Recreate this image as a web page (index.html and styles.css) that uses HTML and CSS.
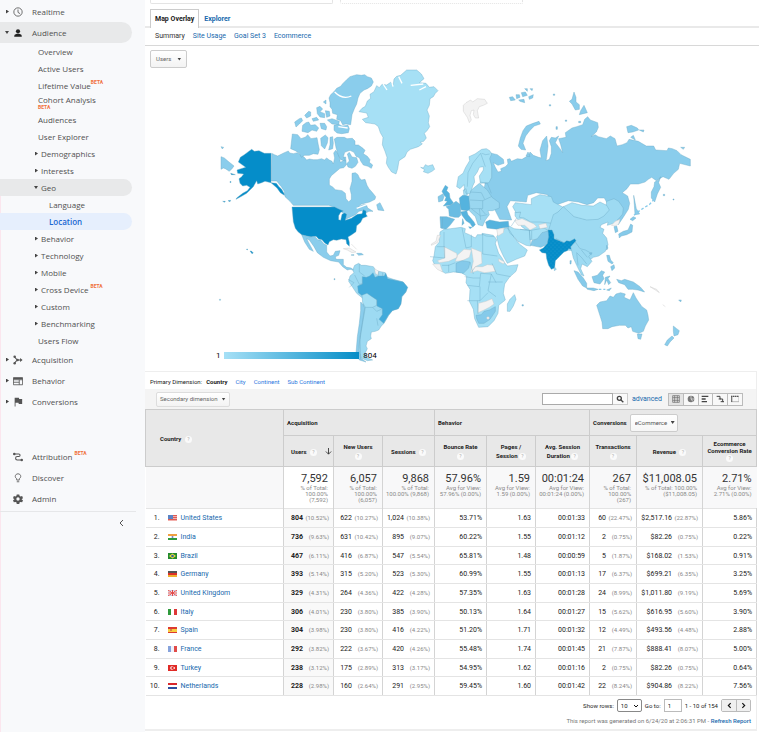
FILE: index.html
```html
<!DOCTYPE html>
<html lang="en">
<head>
<meta charset="utf-8">
<title>Location - Audience</title>
<link rel="stylesheet" href="styles.css">
</head>
<body>
<nav class="side" aria-label="Reports">
  <a class="item" href="#"><i class="caret"></i><svg class="ico" viewBox="0 0 24 24"><circle cx="12" cy="12" r="10" fill="none" stroke="currentColor" stroke-width="2"/><path d="M12 6v7l5 3" fill="none" stroke="currentColor" stroke-width="2"/></svg>Realtime</a>
  <a class="item open" href="#"><i class="caret down"></i><svg class="ico dark" viewBox="0 0 24 24"><circle cx="12" cy="8" r="5"/><path d="M3 21v-2c0-4 6-5 9-5s9 1 9 5v2z"/></svg>Audience</a>
  <a class="sub" href="#">Overview</a>
  <a class="sub" href="#">Active Users</a>
  <a class="sub" href="#">Lifetime Value<b class="beta">BETA</b></a>
  <a class="sub two" href="#"><span>Cohort Analysis</span><b class="beta">BETA</b></a>
  <a class="sub" href="#">Audiences</a>
  <a class="sub" href="#">User Explorer</a>
  <a class="sub tree" href="#"><i class="caret"></i>Demographics</a>
  <a class="sub tree" href="#"><i class="caret"></i>Interests</a>
  <a class="sub tree open" href="#"><i class="caret down"></i>Geo</a>
  <a class="sub leaf" href="#">Language</a>
  <a class="sub leaf current" href="#">Location</a>
  <a class="sub tree" href="#"><i class="caret"></i>Behavior</a>
  <a class="sub tree" href="#"><i class="caret"></i>Technology</a>
  <a class="sub tree" href="#"><i class="caret"></i>Mobile</a>
  <a class="sub tree" href="#"><i class="caret"></i>Cross Device<b class="beta gap">BETA</b></a>
  <a class="sub tree" href="#"><i class="caret"></i>Custom</a>
  <a class="sub tree" href="#"><i class="caret"></i>Benchmarking</a>
  <a class="sub" href="#">Users Flow</a>
  <a class="item" href="#"><i class="caret"></i><svg class="ico" viewBox="0 0 24 24"><path d="M4 5l6 7-6 7M10 12h10" fill="none" stroke="currentColor" stroke-width="2.5"/><circle cx="4" cy="4" r="3"/><circle cx="4" cy="20" r="3"/><circle cx="11" cy="12" r="3"/><path d="M17 7l6 5-6 5z"/></svg>Acquisition</a>
  <a class="item" href="#"><i class="caret"></i><svg class="ico" viewBox="0 0 24 24"><path d="M1 4h22v17H1zM1 9h22M15 9v12M1 15h14" fill="none" stroke="currentColor" stroke-width="2"/><path d="M1 4h22v4H1z"/></svg>Behavior</a>
  <a class="item" href="#"><i class="caret"></i><svg class="ico" viewBox="0 0 24 24"><path d="M4 2h10l1 3h7v12h-8l-1-3H6v9H4z"/></svg>Conversions</a>
  <div class="split"></div>
  <a class="item" href="#"><i class="caret none"></i><svg class="ico" viewBox="0 0 24 24"><path d="M4 5h10c4 0 4 6 0 6h-4c-5 0-5 8 0 8h10" fill="none" stroke="currentColor" stroke-width="2.5"/><circle cx="3" cy="5" r="3"/><circle cx="21" cy="19" r="3"/></svg>Attribution<b class="beta gap">BETA</b></a>
  <a class="item" href="#"><i class="caret none"></i><svg class="ico" viewBox="0 0 24 24"><path d="M9 17v-3c-6-4-4-12 3-12s9 8 3 12v3zM9 21h6" fill="none" stroke="currentColor" stroke-width="2"/></svg>Discover</a>
  <a class="item" href="#"><i class="caret none"></i><svg class="ico" viewBox="0 0 24 24"><path fill-rule="evenodd" d="M9 1h6l1 4 2 1 4-1 2 5-3 2v1l3 2-2 5-4-1-2 1-1 4H9l-1-4-2-1-4 1-2-5 3-2v-1l-3-2 2-5 4 1 2-1zM12 8a4 4 0 100 8 4 4 0 000-8z"/></svg>Admin</a>
  <button class="collapse" aria-label="Collapse menu"><svg viewBox="0 0 8 8"><path d="M5 1L2 4l3 3" fill="none" stroke="currentColor"/></svg></button>
</nav>

<main class="main">
  <div class="cards"><div class="card"></div><div class="card dotted"></div></div>
  <div class="tabs"><a class="tab active" href="#">Map Overlay</a><a class="tab" href="#">Explorer</a></div>
  <div class="subtabs"><a class="here" href="#">Summary</a><a href="#">Site Usage</a><a href="#">Goal Set 3</a><a href="#">Ecommerce</a></div>
  <div class="metric"><button class="btn">Users<i class="drop"></i></button></div>

  <svg class="map" viewBox="0 24 1470 900" role="img" aria-label="Users by country">
    <defs>
      <linearGradient id="scale"><stop offset="0" stop-color="#a6e0f6"/><stop offset="1" stop-color="#058dc7"/></linearGradient>
      <pattern id="dots" width="12" height="12" patternUnits="userSpaceOnUse"><rect width="12" height="12" fill="#058dc9"/><circle cx="3" cy="3" r="1" fill="#6cc0e4"/><circle cx="9" cy="9" r="1" fill="#6cc0e4"/></pattern>
    </defs>
    <!-- North America, Arctic, Greenland -->
    <g class="land">
      <path class="c2" d="M185 280l8 4 10 4 12-6 8-4 12-5 4 6 11 2 12-3 13 9 8 5 7 8 8-3 12 2 12 0 13-3 8 4 7-6 8 6 8 4 4 8 4-18-3-15 6-8 10 14 4 22 8-4 2-12 6 0 2 24-8 8-11 2-12 10-14 12-6 10 0 18 10 6 8 8 20 3 10 8 2 16 8 10 8-8 0-14-4-18 6-22 0-24 10-2 8 6 4 10 7 6 10-2 6 18 6 10 12 14 8 10-2 8-16 8-24 6-12 10 16-8 10 0 4 10 16 10-12 0-12 6-10-8-8 2-12 11-20 9-8 4-3-12-8-10-12-6-16-10-12-4H250l-10-12-15-14-2-16-9-14-14-17h-16z"/>
      <path class="c2" d="M372 95l8-10 12-6 6-8 12-12 10-9 20-6 14 2 10-2 8 6 12 4 6 12-6 12-12 8-10 4-12 10-6 14-4 18-6 12-8 20-4 30-14-2-10 2-6-12-12-4 2-14-14-4-2-12-6-8 0-12-3-14 5-10zM372 196l14-3 10 5 18-2 4 10-3 12-20 3-14-2-9-8zM373 237l8-5 22 0 8 4 16-1 8 8 0 12 10 0 14 10 6 6-5 10 12 8 8 10-2 8 10 8-4 10-10-6-14-4-8-12-4-10-10-4-6-12-12-6-16 6-4 14 6 12-14-4-8-16-6-20z"/>
      <path class="c2" d="M247 222l16 2 10 12 14-5 6-7 10 12 18-3 4 22 3 14-4 14-14-2-12 5-14 0-10 6-6-12-12-8-14-6zM332 235l14-10 8 8-2 16-8 18-10-10zM360 232l8-2 2 20-2 16-12 4 4-16zM254 186l14-10 6-2 4 8-10 10-10 9zM284 166l12-12 6 2 0 12-12 6zM278 196l10-8 8-2 6 10 14-2 10 10-6 10-14-4-12 8-18-4zM306 176l14-4 6 8-16 4zM320 143l10-4 8 8-8 8 14 6 0 12-14-2-8-10zM346 152l12 2 2 14-10 4zM340 126l8-6 0 12zM330 190l14 0 6 10-2 10-14-4zM352 180l14-4 22 8-2 10-20-2zM412 282l6-5 8 14 14 2 4 14-8 12-10 6-12-4-4-10 8-8zM500 434l10-6 6 12 6 12-18-2z"/>
      <path class="bay" d="M374 96q24 24 50 12M462 345q-14-16-24-12M385 200l28 4M440 445l32-12"/>
      <path class="c1" d="M447 155l9-10 10-6 6-16 10-8-2-12 12-8 8-18 8 6 8-10 14 2 12-8 8 6 2-16 8-8 12-3 18-16 30 0 14 12 8 14-14 12 20 2 10 12 14-2 12 12-8 8-6 10-10 6-2 20-7 14 7 18-3 20 4 12-8 12-8 8 6 14-8 10-10 2 6 6-12 8-24 8-10 8-6 14-18 12-4 24-5 16-13-6-10-14-6-12 2-18-6-18-8-20 2-22-8-14-6-18-10-8-14-2-14-2-10-10 18-6-5-13z"/>
      <path class="bay" d="M519 72l12 18M566 50l10 20M545 64l4 16M602 76l38-4M628 90l20-10"/>
      <path class="c1" d="M632 322l8 2 6-10 8 4 14-4 6 14-8 6-12 6-14-5 4-6z"/>
      <path class="us" d="M183 280v88l-18-4-10 4-12 4-3-10-10 18-10 10-10 10-14 8-18 10 2-4 18-14 14-8 8-10-10-6-12 2-8-8-3-14 8-6 6-8-18-2-2-10 12-4 14-4-22-16 6-14 12-8 8-6 14-10 8 6 14-2 16 8zM183 368l16 2 8 10 8 8 8 14 0 4-12-8-10-14zM38 424l8 0-2 3zM54 422l8-1-2 4zM62 340l14 4-12 0zM60 364l4 2-4 2z"/>
      <path class="c2" d="M33 290l10 4 14 12 15 12-6 8-8 8-12-8-6-2-7 4zM33 260l8 2-4 5z"/>
    </g>
    <!-- Russia and northern Europe -->
    <g class="land" transform="translate(660)">
      <path class="c2" d="M178 278l24 6 18 14 2 12-18 6-14-8 6 14 8 14 10-2-2-8 14-6 8-8-2-14 8-2 4 8 18-8 14 2 20-12 4-10 10 10 16 6 8 2-4-24 8-28 12-14 4 30-4 34-2 10 10-4 6-18 0-20-6-18 6-10 12 2 10-6-10 20 14 18 8 12-6-24-6-18 22-4-2-14 20-14 14-4 18-6 6-16 9-8 8 10 22 8 2 14-6 14-16 14 12-6 10 6 24 6 12-8 14 8 6 22 16-4 14-6 6-10 28 6 10 6 14 8 22 0 6 12 34 2 4-8 12 2 14 6 12 12 28 14v20l-32-8-4 18-14 12-14 18-18-8-20 12-14-10-10 6-10 8-20 6-24 0-10 14-14 12 16 10 6 22-4 18-14 22-16 24-6-24-8-6-4-22-14-10-10-18-20 0-12 14-20 6-26-8-30-4-34 12-24-12-4-18-34-6-26 8-4 20-24-2-24-2-10 18 14 40-36-2-16-32-16-18-6-22-10-12 4-22-2-30z"/>
      <path class="c2" d="M692 350l-6 18 6 14-10 20-8 24-10-12 0-18 8-16 2-14 12-6zM611 406l8 40 10 16-14 2zM265 258l6-24 8-22 10-14 20-8 18-6 4 8-18 6-14 14-12 16-8 22 8 20-14-2zM418 124l8-6 6-22 6 16 0 14 10 8 0 14-12 2-10-18zM462 136l10 22-24 6 4-12zM590 200l14-4 18 8 4 6-18 6-14 2zM628 210l14 0-2 6zM602 232l8-6 6 14zM752 262l12 0-4 6zM288 288l12 2-6-14z"/>
      <path class="c3" d="M238 112l10-2 8 10-14 2zM258 104l10 0 2 8-10 4zM274 98l12-2 6 10-14 4zM284 86l8 0 0 8zM296 110l14-6-2 10-10 4zM266 120l16-2 2 10-14-4zM300 86l8 0-2 6zM370 102h4v4h-4zM358 134h4v4h-4zM378 200h4v8h-4zM406 180h4v4h-4zM446 184h6v4h-6zM700 403h4v4h-4zM729 417h3v3h-3z"/>
      <path class="no" d="M108 128l14-8 6 6 14-10 22 2 8 12-12 6-12 4-6 12 4 22-10 0-6-10 2-14-8 2-4 14 4 14-6 8-6-16-12-18 0-18z"/>
      <path class="c1" d="M85 350l14-10 8-18 12-20-2-12 18-8 20-14 14-2 10 6 6 10-6 14 6 22 0 34-8 16-26 2-3-22 12-18 0-10-12 2-6 14-10 14 2 16-6 12-6 22-12 2-6-10-2-18-12 12-10-6zM100 390l8-4 4 18-10 6z"/>
      <path class="edge" d="M112 380l2-42 14-28 24-30 14 40M155 280l12 4 12-2M150 366l22 4 12 30M152 372l-2 16 16 4"/>
      <path class="c4" d="M46 376l8 6-4 10 8 8 2 14 10 14-6 6-24 4 12-14-8-2 4-10-6-6-6-12z"/><path class="c3" d="M24 410l14-8 4 8-4 12-12 4z"/>
    </g>
    <!-- Europe, Africa, Asia, Oceania -->
    <g class="land" transform="translate(630 420)">
      <path class="c1" d="M285 36l60 4 60 4 4 50-76 6-28-20-10-20-10-12z"/>
      <path class="c3b" d="M146-10l8-20 24-20 24 20 14 22 22 16 0 16-20 8-14 0 4 12-12 16-8 18-14-4-8-24-18-18-6-12z"/>
      <path class="edge" d="M150 0l38 2 0 24-36 0M188 2l26-12M182 26l14 16M150-24l34 2 10 20M154 26l28 22 20-4M178 26l4 34"/>
      <path class="c5" d="M78 20l16-6 14-10 14 10 0 32-6 6-12 0-16-4-2-20zM60 50l20 0 24 8-14 18-12 12-16-4z"/>
      <path class="c4" d="M118-6l10-8 18 2 4 38-6 6-20-2-4-18zM122 36l18-4 4 12 18 22 4 8-8 8-8-12-12-8-12-16zM128 56l4 14-6 6zM146 80l10 2-6 4z"/>
      <path class="edge" d="M68 52l-2 34"/>
      <path class="c4" d="M197 66l12-6 30 6 26-2 2 18-22 2-12 4-16-2-16-2z"/>
      <path class="c1" d="M278 20l8-12 48 6 0-18 26-12 34 6 6 16 30 16-16 16-8 18-10 14-36-4-28 0-20-12-14-2 4-16-14 2z"/>
      <path class="c1" d="M268 78l14 8 16 2 30 2 4 48-14-2-12-6-12-6-12-14-12-10-6-14zM328 92l44-8 14 8-16 10-12 16-28 2zM230 110l14-22 20-4 18 28 16 20 24 18-8 18-26 10-26 12-12-22-12-26zM186 100l34 6 6 34 6 32-40-2z"/>
      <path class="no" d="M284 62l22-6 36 16 8 8-20 10-16-14-20 0zM356 74l22-4 4 12-22 4zM230 88l22-4-2 14-16 10z"/>
      <path class="c1b" d="M400 44l14-8 16-16 20 8 10 20 36 10 40-8 20-20 4-26 22-8 14 8 14 20-2 18-10 12-16 16-20 6 2-10-20 8-4 8 12 6-4 12 12 14 4 20-8 20-20 14-16 4-8 6-14-8-16 2-16-20-32-2-28-14-6-16-18-14 4-16z"/>
      <path class="c1" d="M430 20l26-12 30 8 34 2 20-12 20 10 8 14-16 18-18 10-34 2-38-10z"/>
      <path class="c3" d="M332 136l4-14 16-6 14-18 20-6 12 8-10 20-12 16-14 6z"/>
      <path d="M384 90l12 0 6 14 0 12 30 12 8-6 10 2 14-8 4 6-10 12-4 14-8-2-4 6-10 4-12 12-14 14-2 22-10 4-8-12-6-20-2-16-12-2-8-8 12-6 12-14 4-20z" fill="url(#dots)"/>
      <path class="c1b" d="M452 140l14-14 14 20 16 4 18 10-8 10 10 14-14 16-16-8-4 14 10 22-8-4-14-28-10-22zM403 200l6 8-6 4z"/>
      <path class="edge" d="M470 158l16 16 14 18M484 150l18 22M408 116l24 12M470 158l4 38M335 92l0 26M290 54l-16 24M300 88l32 4"/>
      <path class="no" d="M574 76l12-12 14-6-4 14-10 6z"/>
      <path class="c3" d="M582 80l8-2 4 16-8 4zM596 102l14-8 14-4 8-18 6 4-2 20-16 8-16 4-6 6zM630 58l10-8 8 4-10 8zM560 136l4 8-4 6zM508 160l8-2-2 6zM560 166l8 0 4 14 8 8-4 4-12-8zM572 200l10-6 2 10-8 8zM462 212l12 4 16 18 10 16 0 14-12-6-14-20zM500 264l20 0 14 4-12 4-20-4zM516 230l16-4 12-14 10 4-6 10 4 10-12 16-18-4zM556 232l14-4-6 8 8 12-6 6-6-14-6 14zM590 238l14 4 10-4 26 8 20 14 14 16-20-6-16-2-14 0-10-14-18-6zM560 270l14-6-6 8zM450 182l4 0-1 10-3 0z"/>
      <path class="chain" d="M642 46l14-12 18-12 14-8 14-16M536 268l20 0"/>
      <path class="c2" d="M530 316l10-10 20-4 10-14 10 4 8-10 14-4 14 4-4 10 18 8 10-22 8 16 8 12 10 14 14 10 4 16 2 14-10 18-6 16-14 6-18-6-4-14-10 4-8-8-18 0-22 4-12 6-16 0-2-20zM652 402l14 0-4 16-8-2zM760 378l10 8 8 6-4 12-12 4-2-14zM756 408l6 6-12 12-8 12-8-4 8-14z"/>
      <path class="c3" d="M776 300l8 0-2 6zM306 314h4v4h-4z"/>
      <path class="no" d="M690 260l20 8 8 10-12-8zM728 314l8 6"/>
      <path class="c1" d="M60 96l12-8 20-2 32-4 12 4-2 12 14 6 18 10 6-10 18 0 8 4 26 2 6 10-4 10 10 30 10 14 8 14 8 10 32-4-6 20-20 18-14 20-4 28 6 20-20 16-2 24-12 22-18 18-28 2-12-26-4-28-12-24 2-36-12-20 2-20-16-10-24-2-24 4-16-10-16-16-6-12 4-14 4-28 12-14z"/>
      <path class="no" d="M72 140l38 20 2 12-26 12-28 4-6-6 22-8zM112 166l20-18 22 2-6 22-22 10-20 2zM154 144l30 12 2 34-20 10-14 18 8-34zM166 200l22 0 14-6 18 2 6 18-32 4-22-6-18 6zM34 132l14-8 4-18 10 0-10 22-18 8zM38 192l22 0 8 24-16-8zM176 310l22-6 18-8 6 16-14 10-16 8-18 8zM236 176l18 10-4 6-14-8z"/>
      <path class="c3" d="M108 190l18-8 24 4-4 18-16 16-22-4zM168 346l16-2 8-10 16-4 18-10 0 14-16 24-18 12-16 0-6-14z"/>
      <path class="edge" d="M72 140V96M126 84l12 60 16-4V104M188 102l0 60M86 194v22M66 196l20 0 20-8M150 186l10 36M188 162l44 6M216 190l14 32 42 8M134 230l26 4 20 0M142 256l36 4 4-40 32 2-10 50 24 18M180 260l0 42-38 0M180 302l24-24M214 222l14 26M172 302l2 40M204 246l44 0M30 170l44 4V140H50"/>
      <path class="c1" d="M262 312l8-14 14-14 4 14-8 20-10 16-8 0z"/>
      <circle class="no" cx="204" cy="354" r="4"/>
    </g>
    <!-- United States, Mexico, South America -->
    <g class="land" transform="translate(0 420)">
      <path class="c1b" d="M428 210l6-14 12-6 8 6 12 0 24 4 8 12 28 6 6 14 18 6 30 8 12 16-4 14-12 14-4 22-8 14-16 4-12 16-14 24-8 8-8 12-10 4-12 2-2 12 2 8-12 8-4 14 4 8-6 12 2 14 20 8-16 2-18-8-8-20 4-44 4-42 6-38 0-34-20-16-12-18-12-18 4-16 12-10z"/>
      <path class="c1" d="M456 284l14-8 12 10 18 12 0 18-12 6-22 0-8-14z"/>
      <path class="c2" d="M452 306l6 6 6 12-8 50-6 36-4 40 6 24 16 12-20-6-10-20 4-50 6-40 4-38z"/>
      <path class="us" d="M246 21h128l12 6 14 6-8 4-6 10 0 12 6 2 4-18 8-4 6 4-4 18 18-6 18-12 14-2 4-12 8 4 0 10 4 6-14 6-6 12-12 10-2 18-14 10-10 6 4 16 0 12-8-8-2-12-14-2-14 4-10-2-12 6-4 10-10-6-8-10-10-2-8-8-14 2-28-6-12-10-8-10-6-20zM112 150l-3-2 4-1zM120 153l4 0 6 6-4 2z"/>
      <path class="c2" d="M275 104l24 7 14-2 10 10 10 2 8 10 9 5 0 20 10 12 10-2 6-12 14-2-4 14-10 4 2 8 22 0 0 16 10 8 14 2 6 6-10-2-8 2-14-10-12-14-24-4-22-10-18-14-10-18-14-20-8-4 6 12 14 26-12-6-14-22zM440 160l14 0 6 4-14 2zM424 164h8v2h-8zM372 236h3v3h-3zM28 298l4 0-2 4z"/>
      <path class="no" d="M400 146l18-2 20 12-12 2-14-8zM494 206l12 8-2 12-8-6zM424 132l16 16"/>
      <path class="br" d="M443 258l14-6 0-22 12 2 10-4 10-10 6 14 10-4 18 0 4-8 6 16 18 4 28 6 14 16-6 14-12 14-2 22-8 14-18 6-12 14-14 24-14-12 10-14 0-18-16-8 0-18-18-12-12-8-16 6-10-8z"/>
      <path class="edge" d="M448 192l0 24 16 12M414 238l18 10-14 14M434 225l14 28 10-2M466 322l-8 46-8 50 2 60M488 322l12 12 14-6M500 355l4 22M506 214l-2 14M518 218v10"/>
    </g>
    <rect x="42" y="876" width="405" height="21" fill="url(#scale)"/>
    <text x="18" y="894">1</text><text x="460" y="894">804</text>
  </svg>

  <section class="report">
    <div class="dims"><span>Primary Dimension:</span><b>Country</b><a href="#">City</a><a href="#">Continent</a><a href="#">Sub Continent</a></div>
    <div class="tools">
      <button class="btn dim">Secondary dimension<i class="drop"></i></button>
      <form class="search"><input type="search" aria-label="Search table"><button type="button" aria-label="Search"><svg viewBox="0 0 12 12"><circle cx="5" cy="5" r="3" fill="none" stroke="#444" stroke-width="2"/><path d="M7 7l4 4" stroke="#444" stroke-width="2"/></svg></button></form>
      <a class="adv" href="#">advanced</a>
      <div class="views">
        <button class="on" aria-label="Table"><svg viewBox="0 0 12 12"><path d="M1 1h10v10H1zM4 1v10M8 1v10M1 4h10M1 8h10" fill="none" stroke="#666"/></svg></button>
        <button aria-label="Percentage"><svg viewBox="0 0 12 12"><circle cx="6" cy="6" r="5" fill="#777"/><path d="M6 1v5h5M6 6l3 4" fill="none" stroke="#eee"/></svg></button>
        <button aria-label="Performance"><svg viewBox="0 0 12 12"><path d="M1 2h10M1 6h6M1 10h8" stroke="#444" stroke-width="2"/></svg></button>
        <button aria-label="Comparison"><svg viewBox="0 0 12 12"><path d="M1 2h5v4h4v4h2M4 6h3M7 10h4" fill="none" stroke="#444" stroke-width="1.5"/></svg></button>
        <button aria-label="Pivot"><svg viewBox="0 0 12 12"><path d="M0 2h12v8H0z" fill="none" stroke="#999"/><path d="M0 2h12M1 2v9" stroke="#555" stroke-width="2" stroke-dasharray="2 1"/></svg></button>
      </div>
    </div>

    <table>
      <colgroup><col class="w138"><col class="w50"><col class="w49"><col class="w52"><col class="w52"><col class="w49"><col class="w54"><col class="w47"><col class="w66"><col class="w54"></colgroup>
      <thead>
        <tr class="groups"><th class="dimh" rowspan="2">Country <i class="q">?</i></th><th colspan="3">Acquisition</th><th colspan="3">Behavior</th><th colspan="3"><div class="conv"><label for="goal">Conversions</label><div class="pick"><select id="goal"><option>eCommerce</option></select><i class="drop"></i></div></div></th></tr>
        <tr class="heads"><th><div class="sort"><span>Users <i class="q">?</i></span><svg viewBox="0 0 8 8"><path d="M4 0v7M1 4l3 3 3-3" fill="none" stroke="#333"/></svg></div></th><th>New Users<br><i class="q">?</i></th><th>Sessions <i class="q">?</i></th><th>Bounce Rate<br><i class="q">?</i></th><th>Pages /<br>Session <i class="q">?</i></th><th>Avg. Session<br>Duration <i class="q">?</i></th><th>Transactions<br><i class="q">?</i></th><th>Revenue <i class="q">?</i></th><th class="tight">Ecommerce<br>Conversion Rate<br><i class="q">?</i></th></tr>
      </thead>
      <tbody>
        <tr class="total"><td></td><td class="sorted"><strong>7,592</strong>% of Total:<br>100.00%<br>(7,592)</td><td><strong>6,057</strong>% of Total:<br>100.00%<br>(6,057)</td><td><strong>9,868</strong>% of Total:<br>100.00% (9,868)</td><td><strong>57.96%</strong>Avg for View:<br>57.96% (0.00%)</td><td><strong>1.59</strong>Avg for View:<br>1.59 (0.00%)</td><td><strong>00:01:24</strong>Avg for View:<br>00:01:24 (0.00%)</td><td><strong>267</strong>% of Total:<br>100.00%<br>(267)</td><td><strong>$11,008.05</strong>% of Total: 100.00%<br>($11,008.05)</td><td><strong>2.71%</strong>Avg for View:<br>2.71% (0.00%)</td></tr>
      </tbody>
      <tbody class="rows">
        <tr><td><div class="place"><span>1.</span><svg viewBox="0 0 9 6"><path fill="#f3b0ac" d="M0 0h9v6H0z"/><path stroke="#dd5a55" d="M0 .5h9M0 2.5h9M0 4.5h9"/><path fill="#5b83c4" d="M0 0h5v4H0z"/></svg><a href="#">United States</a></div></td><td><b>804</b><i>(10.52%)</i></td><td>622<i>(10.27%)</i></td><td>1,024<i>(10.38%)</i></td><td>53.71%</td><td>1.63</td><td>00:01:33</td><td>60<i>(22.47%)</i></td><td>$2,517.16<i>(22.87%)</i></td><td>5.86%</td></tr>
        <tr><td><div class="place"><span>2.</span><svg viewBox="0 0 9 6"><path fill="#fff" d="M0 0h9v6H0z"/><path fill="#f0a040" d="M0 0h9v2H0z"/><path fill="#2f9a3c" d="M0 4h9v2H0z"/><circle cx="4.500" cy="3" r="1" fill="#7080c0"/></svg><a href="#">India</a></div></td><td><b>736</b><i>(9.63%)</i></td><td>631<i>(10.42%)</i></td><td>895<i>(9.07%)</i></td><td>60.22%</td><td>1.55</td><td>00:01:12</td><td>2<i>(0.75%)</i></td><td>$82.26<i>(0.75%)</i></td><td>0.22%</td></tr>
        <tr><td><div class="place"><span>3.</span><svg viewBox="0 0 9 6"><path fill="#228b30" d="M0 0h9v6H0z"/><path fill="#f4dc3a" d="M1 3l3.500-2.500L8 3 4.500 5.500z"/><circle cx="4.500" cy="3" r="1.300" fill="#3566a8"/></svg><a href="#">Brazil</a></div></td><td><b>467</b><i>(6.11%)</i></td><td>416<i>(6.87%)</i></td><td>547<i>(5.54%)</i></td><td>65.81%</td><td>1.48</td><td>00:00:59</td><td>5<i>(1.87%)</i></td><td>$168.02<i>(1.53%)</i></td><td>0.91%</td></tr>
        <tr><td><div class="place"><span>4.</span><svg viewBox="0 0 9 6"><path fill="#555" d="M0 0h9v2H0z"/><path fill="#dd3028" d="M0 2h9v2H0z"/><path fill="#f0b030" d="M0 4h9v2H0z"/></svg><a href="#">Germany</a></div></td><td><b>393</b><i>(5.14%)</i></td><td>315<i>(5.20%)</i></td><td>523<i>(5.30%)</i></td><td>60.99%</td><td>1.55</td><td>00:01:13</td><td>17<i>(6.37%)</i></td><td>$699.21<i>(6.35%)</i></td><td>3.25%</td></tr>
        <tr><td><div class="place"><span>5.</span><svg viewBox="0 0 9 6"><path fill="#7d90c8" d="M0 0h9v6H0z"/><path stroke="#fff" stroke-width="2" d="M0 0l9 6M0 6l9-6M4.500 0v6M0 3h9"/><path stroke="#e04848" d="M0 0l9 6M0 6l9-6M4.500 0v6M0 3h9"/></svg><a href="#">United Kingdom</a></div></td><td><b>329</b><i>(4.31%)</i></td><td>264<i>(4.36%)</i></td><td>422<i>(4.28%)</i></td><td>57.35%</td><td>1.63</td><td>00:01:28</td><td>24<i>(8.99%)</i></td><td>$1,011.80<i>(9.19%)</i></td><td>5.69%</td></tr>
        <tr><td><div class="place"><span>6.</span><svg viewBox="0 0 9 6"><path fill="#fff" d="M0 0h9v6H0z"/><path fill="#2f9a3c" d="M0 0h3v6H0z"/><path fill="#dd3838" d="M6 0h3v6H6z"/></svg><a href="#">Italy</a></div></td><td><b>306</b><i>(4.01%)</i></td><td>230<i>(3.80%)</i></td><td>385<i>(3.90%)</i></td><td>50.13%</td><td>1.64</td><td>00:01:27</td><td>15<i>(5.62%)</i></td><td>$616.95<i>(5.60%)</i></td><td>3.90%</td></tr>
        <tr><td><div class="place"><span>7.</span><svg viewBox="0 0 9 6"><path fill="#dd3a30" d="M0 0h9v6H0z"/><path fill="#f8cf40" d="M0 2h9v3H0z"/><path fill="#d8804a" d="M2 2h2v2H2z"/></svg><a href="#">Spain</a></div></td><td><b>304</b><i>(3.98%)</i></td><td>230<i>(3.80%)</i></td><td>416<i>(4.22%)</i></td><td>51.20%</td><td>1.71</td><td>00:01:32</td><td>12<i>(4.49%)</i></td><td>$493.56<i>(4.48%)</i></td><td>2.88%</td></tr>
        <tr><td><div class="place"><span>8.</span><svg viewBox="0 0 9 6"><path fill="#eef1fa" d="M0 0h9v6H0z"/><path fill="#87a3dc" d="M0 0h3v6H0z"/><path fill="#e04a48" d="M6 0h3v6H6z"/></svg><a href="#">France</a></div></td><td><b>292</b><i>(3.82%)</i></td><td>222<i>(3.67%)</i></td><td>420<i>(4.26%)</i></td><td>55.48%</td><td>1.74</td><td>00:01:45</td><td>21<i>(7.87%)</i></td><td>$888.41<i>(8.07%)</i></td><td>5.00%</td></tr>
        <tr><td><div class="place"><span>9.</span><svg viewBox="0 0 9 6"><path fill="#e02a26" d="M0 0h9v6H0z"/><circle cx="4" cy="3" r="1.800" fill="#fff"/><circle cx="4.600" cy="3" r="1.200" fill="#e02a26"/><path fill="#fff" d="M5 3l2-1v2z"/></svg><a href="#">Turkey</a></div></td><td><b>238</b><i>(3.12%)</i></td><td>175<i>(2.89%)</i></td><td>313<i>(3.17%)</i></td><td>54.95%</td><td>1.62</td><td>00:01:16</td><td>2<i>(0.75%)</i></td><td>$82.26<i>(0.75%)</i></td><td>0.64%</td></tr>
        <tr><td><div class="place"><span>10.</span><svg viewBox="0 0 9 6"><path fill="#fff" d="M0 0h9v6H0z"/><path fill="#d8282c" d="M0 0h9v2H0z"/><path fill="#2c4fa0" d="M0 4h9v2H0z"/></svg><a href="#">Netherlands</a></div></td><td><b>228</b><i>(2.98%)</i></td><td>160<i>(2.64%)</i></td><td>291<i>(2.95%)</i></td><td>59.45%</td><td>1.60</td><td>00:01:42</td><td>22<i>(8.24%)</i></td><td>$904.86<i>(8.22%)</i></td><td>7.56%</td></tr>
      </tbody>
    </table>

    <div class="pager">
      <label for="rows">Show rows:</label><div class="pick count"><select id="rows"><option>10</option></select><svg viewBox="0 0 6 4"><path d="M1 1l2 2 2-2" fill="none" stroke="#111"/></svg></div>
      <label for="goto">Go to:</label><input id="goto" type="text" value="1">
      <span class="range">1 - 10 of 154</span>
      <div class="step"><button aria-label="Previous"><svg viewBox="0 0 6 6"><path d="M4 1L2 3l2 2" fill="none" stroke="#111"/></svg></button><button aria-label="Next"><svg viewBox="0 0 6 6"><path d="M2 1l2 2-2 2" fill="none" stroke="#111"/></svg></button></div>
    </div>
    <p class="stamp">This report was generated on 6/24/20 at 2:06:31 PM - <a href="#">Refresh Report</a></p>
  </section>
</main>
</body>
</html>
```
FILE: styles.css
```css
* { box-sizing: border-box; }
body { margin: 0; display: flex; min-height: 100vh; background: #fff; color: #222; font: 7px/10px Roboto, "Liberation Sans", sans-serif; }
a { color: #1769ad; text-decoration: none; }
button, input, select { font: inherit; color: inherit; margin: 0; padding: 0; border: 0; border-radius: 0; background: none; appearance: none; }
i { font-style: normal; }
svg { display: block; flex: none; }

/* Sidebar */
.side { flex: none; width: 145px; padding-top: 1px; color: #555; font: 8px/10px "Open Sans", "Liberation Sans", sans-serif; background: linear-gradient(#fbe6ee, #fbe6ee) 0 180px / 1px 100% no-repeat #f8f9fb; }
.side a { display: flex; align-items: center; margin-right: 13px; color: #505050; border-radius: 0 11px 11px 0; }
.item { height: 21px; padding-left: 6px; }
.side .open { background: #e8e9ea; }
.side .current { background: #e6effd; color: #1967d2; font-weight: 600; }
.sub { height: 17px; padding-left: 38px; }
.tree { padding-left: 35px; }
.leaf { padding-left: 49px; }
.side .two { flex-direction: column; align-items: flex-start; justify-content: center; line-height: 9px; }
.side .two .beta { margin: 0; }
.beta { margin-bottom: 7px; color: #f0703c; font: 700 5px/6px Roboto, sans-serif; }
.gap { margin-left: 2px; }
.caret { flex: none; width: 3px; height: 4px; background: #444; clip-path: polygon(0 0, 100% 50%, 0 100%); }
.caret.down { width: 4px; height: 3px; clip-path: polygon(0 0, 100% 0, 50% 100%); }
.caret.none { visibility: hidden; }
.tree .caret { margin-right: 3px; }
.tree .down { margin: 0 3px 0 -1px; }
.item .caret + .ico { margin-left: 4px; }
.item .down { margin-left: -1px; }
.ico { width: 10px; height: 10px; margin-right: 9px; fill: currentColor; color: #555; }
.dark { color: #222; }
.split { height: 34px; }
.collapse { display: block; width: 136px; padding: 7px 10px 7px 118px; margin-top: 2px; border-top: 1px solid #e6e7e9; }
.collapse svg { width: 8px; height: 8px; }

/* Top of the report */
.main { flex: 1; min-width: 0; margin-right: 2px; }
.cards { display: flex; gap: 7px; height: 4px; padding-left: 5px; }
.card { width: 183px; border: 1px solid #e4e4e4; border-top: 0; border-radius: 0 0 2px 2px; }
.dotted { border-style: dotted; }
.tabs { display: flex; padding: 5px 0 0 5px; }
.tabs, .subtabs { margin-right: -2px; }
.tabs { border-bottom: 2px solid #e9e9e9; }
.tab { padding: 4px 4px 2px; font-weight: 700; border: 1px solid transparent; border-bottom: 0; }
.tab.active { margin-bottom: -2px; padding-bottom: 4px; color: #222; background: #fff; border-color: #ccc; }
.subtabs { display: flex; gap: 8px; padding: 3px 10px 4px; border-bottom: 1px solid #d8d8d8; }
.subtabs .here { color: #333; }
.metric { padding: 4px 0 0 5px; }
.btn { display: flex; align-items: center; justify-content: space-between; gap: 6px; height: 18px; padding: 0 5px; color: #666; font-size: 6px; border: 1px solid #ccc; border-radius: 2px; background: linear-gradient(#fff, #f3f3f3); }
.drop { flex: none; width: 4px; height: 3px; background: #444; clip-path: polygon(0 0, 100% 0, 50% 100%); }

/* Map */
.map { width: 490px; max-width: 100%; height: auto; margin-left: 65px; font-size: 24px; }
.land path, .land circle { stroke: #6aa9c4; stroke-opacity: 0.6; stroke-width: 2; stroke-linejoin: round; }
.c1 { fill: #a6e0f5; }
.c1b { fill: #9ddaf2; }
.c2 { fill: #8acdec; }
.c3 { fill: #85caea; }
.c3b { fill: #9ad7f0; }
.c4 { fill: #55b3de; }
.c5 { fill: #6abce2; }
.br { fill: #42abdb; }
.us { fill: #058dc9; }
.no { fill: #f3f3f3; }
.land .no { stroke: #c6c6c6; }
.land .edge { fill: none; }
.land .bay { fill: none; stroke: #fff; stroke-opacity: 1; stroke-width: 4; }
.land .chain { fill: none; stroke: #85caea; stroke-opacity: 1; stroke-width: 4; stroke-dasharray: 8 6; }

/* Report table */
.report { margin-top: 3px; border: 1px solid #eee; border-left: 0; border-bottom: 2px solid #eee; }
.dims { display: flex; gap: 8px; padding: 5px 5px 2px; font-size: 6px; }
.dims a { color: #2a78e0; }
.dims b { margin-left: -4px; }
.tools { display: flex; align-items: center; height: 20px; padding: 0 13px 0 11px; background: #f4f4f4; }
.dim { gap: 4px; height: 15px; padding: 0 3px; border-color: #ddd; }
.search { display: flex; width: 86px; height: 12px; margin-left: auto; }
.search input { flex: 1; min-width: 0; background: #fff; border: 1px solid #aaa; }
.search button { display: grid; place-items: center; width: 15px; border: 1px solid #ccc; border-left: 0; background: #fafafa; }
.search svg, .views svg { width: 8px; height: 8px; }
.adv { margin: 0 6px 0 4px; }
.views { display: flex; width: 75px; height: 13px; border: 1px solid #bbb; }
.views button { display: grid; place-items: center; flex: 1; background: #f8f8f8; border-left: 1px solid #bbb; }
.views button:first-child { border-left: 0; }
.views .on { background: #e4e4e4; }
table { width: 100%; table-layout: fixed; border-collapse: collapse; }
.w138 { width: 138px; } .w50 { width: 50px; } .w49 { width: 49px; } .w52 { width: 52px; } .w54 { width: 54px; } .w47 { width: 47px; } .w66 { width: 66px; }
th, td { padding: 0; border: 0 solid #d4d4d4; white-space: nowrap; }
th { background: #e8e8e8; font-size: 6px; line-height: 9px; border-width: 1px; border-color: #ccc; }
.groups { height: 26px; }
.groups th { padding-left: 3px; text-align: left; }
.groups .dimh { padding-left: 14px; }
.heads { height: 31px; }
.heads .tight { line-height: 7px; }
.q { display: inline-block; width: 7px; height: 7px; margin-left: 2px; border-radius: 50%; background: #fafafa; color: #aaa; font: 5px/7px Roboto, sans-serif; text-align: center; }
br + .q { margin: 0; }
.sort { display: flex; justify-content: flex-end; align-items: center; gap: 8px; padding-right: 1px; }
.sort svg { width: 7px; height: 7px; }
.conv { display: flex; align-items: center; gap: 3px; }
.pick { position: relative; display: flex; align-items: center; }
.pick select { width: 48px; height: 18px; padding-left: 4px; font-weight: 400; color: #555; background: linear-gradient(#fff, #f6f6f6); border: 1px solid #ccc; border-radius: 2px; }
.pick .drop, .pick svg { position: absolute; right: 3px; pointer-events: none; }
.total { height: 42px; }
.total td { padding: 6px 5px 0 0; vertical-align: top; text-align: right; color: #888; font-size: 6px; line-height: 6px; border-left-width: 1px; background: #f8f8f9; }
.total .sorted { background: #fff; }
.total strong { display: block; color: #333; font-size: 11px; line-height: 12px; font-weight: 400; }
.rows tr { height: 19px; }
.rows tr:nth-child(3n) { height: 18px; }
.rows td { padding-right: 4px; text-align: right; border-width: 1px; border-top-color: #e4e4e4; border-bottom-color: #e4e4e4; }
.rows td:nth-child(2) { background: #f9f9f9; }
.rows td > i { display: inline-block; width: 26px; color: #888; font-size: 6px; }
.rows td:first-child, .total td:first-child { border-left-width: 0; }
.place { display: flex; align-items: center; gap: 4px; }
.place span { width: 14px; margin-right: 4px; }
.place svg { width: 9px; height: 6px; }

/* Footer */
.pager { display: flex; align-items: center; justify-content: flex-end; gap: 3px; padding: 3px 5px 1px 0; font-size: 6px; }
.count select { width: 25px; height: 13px; padding-left: 3px; color: #222; border-color: #888; background: #fff; }
.count svg { width: 6px; height: 4px; }
.pager input { width: 18px; height: 13px; padding-left: 3px; border: 1px solid #bbb; }
.step { display: flex; border: 1px solid #bbb; border-radius: 2px; }
.step button { display: grid; place-items: center; width: 14px; height: 11px; background: #f0f0f0; }
.step button + button { border-left: 1px solid #bbb; }
.step svg { width: 7px; height: 7px; }
.stamp { margin: 0; padding: 3px 5px 3px; color: #777; text-align: right; font-size: 6px; }
.stamp a { font-weight: 500; }
```
